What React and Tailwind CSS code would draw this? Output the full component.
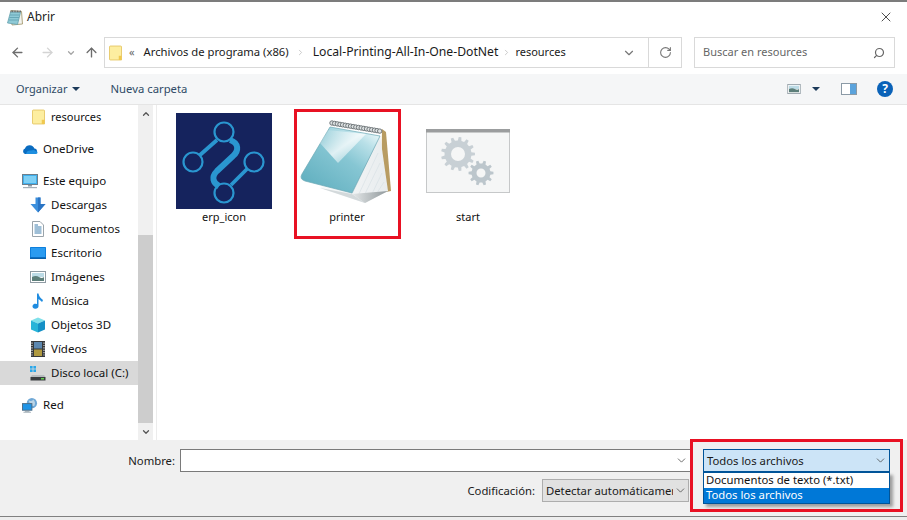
import React from "react";
import { ArrowLeft, ArrowRight, ArrowUp, ChevronDown, ChevronUp, RotateCw, Search, X } from "lucide-react";

const font = "font-['Noto_Sans','Open_Sans',sans-serif]";

function FolderIcon({ className }) {
  return (
    <svg viewBox="0 0 14 16" className={className}>
      <path d="M0.5 1.5 Q0.5 0.5 1.5 0.5 H12.5 Q13.5 0.5 13.5 1.5 V15.5 H1.5 Q0.5 15.5 0.5 14.5 Z" fill="#fdeea0" stroke="#e6c766" />
      <rect x="10.5" y="11" width="3" height="4.5" fill="#f0c94f" />
    </svg>
  );
}

function OneDriveIcon() {
  return (
    <svg viewBox="0 0 16 10" className="w-4 h-[10px]">
      <path d="M3 10 A3 3 0 0 1 3 4.4 A5 5 0 0 1 12.4 4.6 A2.8 2.8 0 0 1 13.4 10 Z" fill="#0a6cc0" />
      <path d="M4 10 Q5 6 9 6.6 Q12 5 13.4 7 Q16 7.4 15.6 9 Q15 10 13.4 10 Z" fill="#1e8fe0" />
    </svg>
  );
}

function PcIcon() {
  return (
    <svg viewBox="0 0 16 16" className="w-4 h-4">
      <rect x="0.5" y="1.5" width="15" height="10" fill="#3fb0ee" stroke="#6d7f8c" />
      <path d="M2 3 H14 V10 H2 Z" fill="#7fd0f5" />
      <rect x="6" y="12" width="4" height="1.5" fill="#8d9aa3" />
      <rect x="1" y="14" width="14" height="1.2" fill="#a5b0b8" />
    </svg>
  );
}

function DownloadIcon() {
  return (
    <svg viewBox="0 0 16 16" className="w-4 h-4">
      <path d="M5.5 0.5 H10.5 V7 H15.5 L8 15.5 L0.5 7 H5.5 Z" fill="#3c8fdc" />
      <path d="M8 0.5 H10.5 V7 H15.5 L8 15.5 Z" fill="#2a74c4" />
    </svg>
  );
}

function DocIcon() {
  return (
    <svg viewBox="0 0 16 16" className="w-4 h-4">
      <path d="M2.5 0.5 H10 L13.5 4 V15.5 H2.5 Z" fill="#fff" stroke="#9aa4ab" />
      <path d="M4.5 4 H8 M4.5 6 H11.5 M4.5 8 H11.5 M4.5 10 H11.5 M4.5 12 H11.5" stroke="#3f7fae" />
    </svg>
  );
}

function DesktopIcon() {
  return (
    <svg viewBox="0 0 16 12" className="w-4 h-3">
      <rect x="0" y="0" width="16" height="12" rx="0.5" fill="#0d7fdc" />
      <rect x="1" y="1" width="14" height="9" fill="#2a9bf0" />
      <rect x="0" y="10.5" width="16" height="1.5" fill="#0a5fa8" />
    </svg>
  );
}

function PictureIcon({ className = "w-4 h-3" }) {
  return (
    <svg viewBox="0 0 16 12" className={className}>
      <rect x="0.5" y="0.5" width="15" height="11" fill="#fff" stroke="#8f9ba3" />
      <rect x="2" y="2" width="12" height="4" fill="#bcdbe6" />
      <path d="M2 6 Q6 4 9 6 T14 6 V10 H2 Z" fill="#5d7f7a" />
    </svg>
  );
}

function MusicIcon() {
  return (
    <svg viewBox="0 0 16 16" className="w-4 h-4">
      <path d="M7 0.5 H8.5 Q9 4 13 7 Q12.5 8.5 12 9 Q10 7 8.5 6 V13 A3 2.6 0 1 1 7 11 Z" fill="#1f8ce0" />
    </svg>
  );
}

function CubeIcon() {
  return (
    <svg viewBox="0 0 16 16" className="w-4 h-4">
      <path d="M8 0.5 L15 3.5 L8 6.5 L1 3.5 Z" fill="#7fe0ea" />
      <path d="M1 3.5 L8 6.5 V15.5 L1 12.5 Z" fill="#27b4d8" />
      <path d="M15 3.5 L8 6.5 V15.5 L15 12.5 Z" fill="#1490c6" />
    </svg>
  );
}

function VideoIcon() {
  return (
    <svg viewBox="0 0 14 16" className="w-[14px] h-4">
      <rect width="14" height="16" fill="#37393b" />
      <rect x="3" y="1" width="8" height="6.5" fill="#5d88b0" />
      <rect x="3" y="8.5" width="8" height="6.5" fill="#b09a40" />
      <path d="M1 1.5 V14.5 M13 1.5 V14.5" stroke="#d8d8d8" strokeDasharray="1.2 1.2" strokeWidth="1.2" />
    </svg>
  );
}

function DiskIcon() {
  return (
    <svg viewBox="0 0 16 16" className="w-4 h-4">
      <rect x="0" y="1" width="2.6" height="2.6" fill="#2aa7ea" />
      <rect x="3.4" y="1" width="2.6" height="2.6" fill="#2aa7ea" />
      <rect x="0" y="4.4" width="2.6" height="2.6" fill="#2aa7ea" />
      <rect x="3.4" y="4.4" width="2.6" height="2.6" fill="#2aa7ea" />
      <path d="M2 10 H14 L15.5 12 H0.5 Z" fill="#b8bcbf" />
      <rect x="0.5" y="12" width="15" height="3.5" fill="#3a3d40" />
      <rect x="11" y="13" width="3" height="1.5" fill="#63d04f" />
    </svg>
  );
}

function NetworkIcon() {
  return (
    <svg viewBox="0 0 17 17" className="w-[17px] h-[17px]">
      <circle cx="10.5" cy="6" r="5.5" fill="#6fa8d6" />
      <path d="M7 3 Q10 5 12 2 Q15 5 13 9 Q9 10 7 3" fill="#b9d4e6" />
      <rect x="0.5" y="6.5" width="10" height="7" fill="#1f94e6" stroke="#4a6a84" />
      <rect x="3" y="14" width="5" height="1" fill="#7a8a96" />
      <rect x="1.5" y="15.2" width="8" height="1" fill="#a5b0b8" />
    </svg>
  );
}

const navItems = [
  { label: "resources", icon: <FolderIcon className="w-[13px] h-[16px]" />, indent: "pl-[30px]", gap: "gap-[5px]", mb: "mb-2", text: "text-[11px]" },
  { label: "OneDrive", icon: <OneDriveIcon />, indent: "pl-[22px]", gap: "gap-[5px]", mb: "mb-2" },
  { label: "Este equipo", icon: <PcIcon />, indent: "pl-[22px]", gap: "gap-[5px]" },
  { label: "Descargas", icon: <DownloadIcon />, indent: "pl-[30px]", gap: "gap-[5px]" },
  { label: "Documentos", icon: <DocIcon />, indent: "pl-[30px]", gap: "gap-[5px]" },
  { label: "Escritorio", icon: <DesktopIcon />, indent: "pl-[30px]", gap: "gap-[5px]" },
  { label: "Imágenes", icon: <PictureIcon />, indent: "pl-[30px]", gap: "gap-[5px]" },
  { label: "Música", icon: <MusicIcon />, indent: "pl-[30px]", gap: "gap-[5px]" },
  { label: "Objetos 3D", icon: <CubeIcon />, indent: "pl-[30px]", gap: "gap-[5px]" },
  { label: "Vídeos", icon: <VideoIcon />, indent: "pl-[30px]", gap: "gap-[5px]" },
  { label: "Disco local (C:)", icon: <DiskIcon />, indent: "pl-[30px]", gap: "gap-[5px]", selected: true, mb: "mb-2" },
  { label: "Red", icon: <NetworkIcon />, indent: "pl-[22px]", gap: "gap-[5px]" },
];

function ErpIcon() {
  return (
    <svg viewBox="0 0 96 96" className="w-[96px] h-[96px] block">
      <rect width="96" height="96" fill="#15235d" />
      <g fill="none" stroke="#2a96d0">
        <circle cx="48" cy="19" r="9.5" strokeWidth="2.2" />
        <circle cx="17" cy="49" r="9.5" strokeWidth="2.2" />
        <circle cx="78" cy="49" r="9.5" strokeWidth="2.2" />
        <circle cx="48" cy="80" r="9.5" strokeWidth="2.2" />
        <path d="M24 42 L41 27" strokeWidth="3.8" />
        <path d="M71 56 L55 72" strokeWidth="3.8" />
        <path d="M54 27 C63 30 63 38 57 43 L41 58 C35 64 37 70 43 73" strokeWidth="6" />
      </g>
    </svg>
  );
}

function NotepadIcon({ className }) {
  const rings = [];
  for (let i = 0; i < 19; i++) {
    rings.push(<circle key={i} cx={330 + i * 2.65} cy={125 + i * 0.45} r="2.2" fill="#dfe3e4" stroke="#6f7679" strokeWidth="1" />);
  }
  return (
    <svg viewBox="295 118 100 90" className={className}>
      <defs>
        <linearGradient id="cover" x1="0.1" y1="0.9" x2="0.85" y2="0.05">
          <stop offset="0" stopColor="#62b0c0" />
          <stop offset="0.55" stopColor="#86c6d3" />
          <stop offset="0.85" stopColor="#b9e0e8" />
          <stop offset="1" stopColor="#dff2f5" />
        </linearGradient>
        <linearGradient id="shine" x1="0" y1="0" x2="1" y2="1">
          <stop offset="0" stopColor="#ffffff" stopOpacity="0" />
          <stop offset="0.5" stopColor="#ffffff" stopOpacity="0.75" />
          <stop offset="1" stopColor="#ffffff" stopOpacity="0" />
        </linearGradient>
        <linearGradient id="pageShade" x1="0" y1="0" x2="1" y2="0">
          <stop offset="0" stopColor="#f8fafa" />
          <stop offset="1" stopColor="#e8ecee" />
        </linearGradient>
        <linearGradient id="pageFoot" x1="0" y1="0" x2="1" y2="0">
          <stop offset="0" stopColor="#e4e8e9" />
          <stop offset="1" stopColor="#8f979a" />
        </linearGradient>
      </defs>
      <path d="M380 131 L384 134 L389 193 L379 195 Z" fill="#b89c62" />
      <path d="M378 137 L386 193 L363 205 L318 190 Z" fill="url(#pageShade)" />
      <path d="M374 146 L350 196 M376 155 L356 198 M378 165 L361 200 M380 175 L368 200 M382 184 L373 198" stroke="#d9e1e5" strokeWidth="0.7" />
      <path d="M318 190 L350 196 L363 205 Z" fill="#d3d9db" />
      <path d="M350 196 L386 193 L363 205 Z" fill="url(#pageFoot)" />
      <path d="M328 129 L378 138 L350 195 L303 183 Q297 181 300 176 Z" fill="url(#cover)" stroke="#6aa8b5" strokeWidth="0.7" />
      <path d="M326 132 L364 136 L336 165 L318 145 Z" fill="url(#shine)" />
      {rings}
    </svg>
  );
}

function TitleIcon() {
  return (
    <svg viewBox="0 0 16 17" className="w-[16px] h-[17px]">
      <path d="M4 1.5 L14.5 2.5 L15.5 15 L5 16 Z" fill="#f2f3ee" stroke="#9c9165" strokeWidth="0.8" />
      <path d="M3.5 3 L13.5 3.5 L10.5 15.5 L0.5 14 Z" fill="#8fcad6" stroke="#5a9aa8" strokeWidth="0.7" />
      <path d="M3 6 H12.5 M2.5 8.5 H12 M2 11 H11.5" stroke="#5d9fae" strokeWidth="0.8" />
      <path d="M3.5 2.4 H14" stroke="#5f6466" strokeWidth="1.8" strokeDasharray="1 0.6" />
    </svg>
  );
}

function gearPath(cx, cy, outer, inner, hole, teeth) {
  let d = "";
  const step = (Math.PI * 2) / teeth;
  for (let i = 0; i < teeth; i++) {
    const a = i * step;
    const pts = [
      [inner, a - step * 0.28],
      [outer, a - step * 0.16],
      [outer, a + step * 0.16],
      [inner, a + step * 0.28],
    ];
    pts.forEach(([r, t], j) => {
      d += `${i === 0 && j === 0 ? "M" : "L"}${(cx + r * Math.cos(t)).toFixed(2)} ${(cy + r * Math.sin(t)).toFixed(2)} `;
    });
  }
  d += `Z M${cx + hole} ${cy} A${hole} ${hole} 0 1 0 ${cx - hole} ${cy} A${hole} ${hole} 0 1 0 ${cx + hole} ${cy} Z`;
  return d;
}

function StartIcon() {
  return (
    <svg viewBox="0 0 84 64" className="w-[84px] h-[64px] block">
      <rect x="0.5" y="0.5" width="83" height="63" fill="#f5f6f6" stroke="#c6c8c9" />
      <rect width="84" height="3.5" fill="#9b9d9e" />
      <path d={gearPath(32, 25, 17, 13.5, 7, 13)} fill="#c8d0d5" fillRule="evenodd" />
      <path d={gearPath(55, 44, 12.5, 9.5, 4.5, 10)} fill="#bcc6cc" fillRule="evenodd" />
    </svg>
  );
}

function FileItem({ label, children, width }) {
  return (
    <div className={`flex flex-col items-center ${width}`}>
      <div className="h-[96px] flex items-center justify-center">{children}</div>
      <span className="text-[11px] leading-4 text-[#111]">{label}</span>
    </div>
  );
}

export default function App() {
  return (
    <div className={`relative w-[907px] h-[520px] overflow-hidden bg-white flex flex-col ${font} text-[11.3px] text-[#1a1a1a]`}>
      {/* Title bar */}
      <div className="h-[36px] border-t-2 border-[#7c7c7c] flex items-center justify-between pl-[7px] pr-[13px] shrink-0">
        <div className="flex items-center gap-[4px] -mt-[4px]">
          <TitleIcon />
          <span className="text-[#222] text-[12px]">Abrir</span>
        </div>
        <X size={16} strokeWidth={1.2} className="text-[#222] -mt-[4px]" />
      </div>

      {/* Nav row */}
      <div className="h-[31px] flex items-center shrink-0 pl-[10px] mt-[1px]">
        <ArrowLeft size={15} strokeWidth={2.2} className="text-[#6d6d6d]" />
        <ArrowRight size={15} strokeWidth={2.2} className="text-[#d4d4d4] ml-[15px]" />
        <ChevronDown size={10} strokeWidth={3} className="text-[#a5a5a5] ml-[11px]" />
        <ArrowUp size={15} strokeWidth={2.2} className="text-[#6d6d6d] ml-[8px]" />
        <div className="ml-[5px] w-[578px] h-full border border-[#d9d9d9] flex items-center pl-[4px]">
          <FolderIcon className="w-[13px] h-[16px] shrink-0" />
          <span className="ml-[7px] text-[#666] text-[11px]">«</span>
          <span className="ml-[9px] text-[11.25px]">Archivos de programa (x86)</span>
          <ChevronDown size={9} className="text-[#bbb] -rotate-90 ml-[7px]" />
          <span className="ml-[8px] text-[12.2px]">Local-Printing-All-In-One-DotNet</span>
          <ChevronDown size={9} className="text-[#bbb] -rotate-90 ml-[4px]" />
          <span className="ml-[4px] text-[11px]">resources</span>
          <div className="ml-auto h-full flex items-center">
            <ChevronDown size={14} strokeWidth={2} className="text-[#777] mr-[12px]" />
            <div className="w-[33px] h-full border-l border-[#d9d9d9] flex items-center justify-center">
              <RotateCw size={13} className="text-[#777]" />
            </div>
          </div>
        </div>
        <div className="ml-[12px] w-[201px] h-full border border-[#d9d9d9] flex items-center justify-between pl-[8px] pr-[9px]">
          <span className="text-[#666] text-[11px]">Buscar en resources</span>
          <Search size={12} strokeWidth={2.4} className="text-[#666] -scale-x-100" />
        </div>
      </div>

      {/* Toolbar */}
      <div className="h-[31px] mt-[6px] bg-[#f5f6f7] border-b border-[#e5e5e5] flex items-center pl-[16px] pr-[14px] shrink-0">
        <span className="text-[#2f4a66] text-[11px]">Organizar</span>
        <span className="ml-[5px] border-x-[4px] border-x-transparent border-t-[4px] border-t-[#1c3a5a]" />
        <span className="ml-[30px] text-[#2f4a66]">Nueva carpeta</span>
        <div className="ml-auto flex items-center">
          <PictureIcon className="w-[14px] h-[10px]" />
          <span className="ml-[11px] border-x-[4px] border-x-transparent border-t-[4px] border-t-[#1c3a5a]" />
          <div className="ml-[21px] w-[16px] h-[12px] border border-[#8b9aa6] flex justify-end bg-white">
            <div className="w-[6px] bg-[#5ba3dc]" />
          </div>
          <div className="ml-[20px] w-[16px] h-[16px] rounded-full bg-[#0a62b8] flex items-center justify-center text-white text-[12px] font-bold leading-none">?</div>
        </div>
      </div>

      {/* Main area */}
      <div className="flex h-[335px] shrink-0">
        <div className="w-[138px] shrink-0 flex flex-col">
          {navItems.map((item) => (
            <div
              key={item.label}
              className={`h-[24px] shrink-0 flex items-center ${item.indent} ${item.gap} ${item.mb || ""} ${item.selected ? "bg-[#d9d9d9]" : ""}`}
            >
              <span className="w-[16px] flex justify-center shrink-0">{item.icon}</span>
              <span className={`whitespace-nowrap text-[#111] ${item.text || "text-[11.5px]"}`}>{item.label}</span>
            </div>
          ))}
        </div>
        <div className="w-[15px] shrink-0 bg-[#f0f0f0] flex flex-col items-center">
          <div className="h-[17px] flex items-center justify-center">
            <ChevronUp size={10} strokeWidth={3} className="text-[#555]" />
          </div>
          <div className="h-[113px]" />
          <div className="w-full flex-1 bg-[#cdcdcd]" />
          <div className="h-[17px] flex items-center justify-center">
            <ChevronDown size={10} strokeWidth={3} className="text-[#555]" />
          </div>
        </div>
        <div className="flex-1 ml-[3px] border-l border-[#ececec] pt-[8px] pl-[19px] flex items-start">
          <FileItem label="erp_icon" width="w-[96px]"><ErpIcon /></FileItem>
          <FileItem label="printer" width="ml-[27px] w-[96px]"><NotepadIcon className="w-[100px] h-[90px] shrink-0" /></FileItem>
          <FileItem label="start" width="ml-[25px] w-[96px]"><StartIcon /></FileItem>
        </div>
      </div>

      {/* Bottom panel */}
      <div className="h-[76px] bg-[#f0f0f0] shrink-0 pt-[9px] flex flex-col gap-[7px]">
        <div className="flex items-center h-[23px]">
          <span className="w-[176px] text-right pr-[1px] pt-[1px]">Nombre:</span>
          <div className="ml-[4px] w-[511px] h-full bg-white border border-[#7a7a7a] flex items-center justify-end pr-[2px]">
            <ChevronDown size={13} strokeWidth={1.4} className="text-[#444]" />
          </div>
          <div className="relative ml-[12px] w-[187px] h-full bg-[#cce4f7] border border-[#005499] flex items-center justify-between pl-[3px] pr-[2px]">
            <span className="pt-[1px]">Todos los archivos</span>
            <ChevronDown size={13} strokeWidth={1.4} className="text-[#444]" />
            <div className="absolute left-[-1px] top-[22px] w-[187px] bg-white border border-[#005499] shadow-[3px_3px_3px_rgba(0,0,0,0.35)] flex flex-col">
              <div className="h-[15px] pl-[2px] flex items-center text-[#111]">Documentos de texto (*.txt)</div>
              <div className="h-[15px] pl-[2px] flex items-center bg-[#0078d7] text-white">Todos los archivos</div>
            </div>
          </div>
        </div>
        <div className="flex items-center h-[23px]">
          <span className="w-[535px] text-right pt-[1px]">Codificación:</span>
          <div className="ml-[7px] w-[147px] h-full bg-[#e1e1e1] border border-[#adadad] flex items-center pl-[3px] pr-[1px] overflow-hidden">
            <span className="whitespace-nowrap overflow-hidden w-[127px] pt-[1px]">Detectar automáticamente</span>
            <ChevronDown size={13} strokeWidth={1.4} className="text-[#444] ml-auto shrink-0" />
          </div>
        </div>
      </div>
      <div className="h-[1px] bg-[#808080] shrink-0" />
      <div className="flex-1 bg-[#ededed]" />

      {/* Red annotation boxes */}
      <div className="absolute left-[294px] top-[109px] w-[107px] h-[130px] border-[3px] border-[#e81123] pointer-events-none" />
      <div className="absolute left-[690px] top-[439px] w-[213px] h-[73px] border-[3px] border-[#e81123] pointer-events-none" />
    </div>
  );
}
